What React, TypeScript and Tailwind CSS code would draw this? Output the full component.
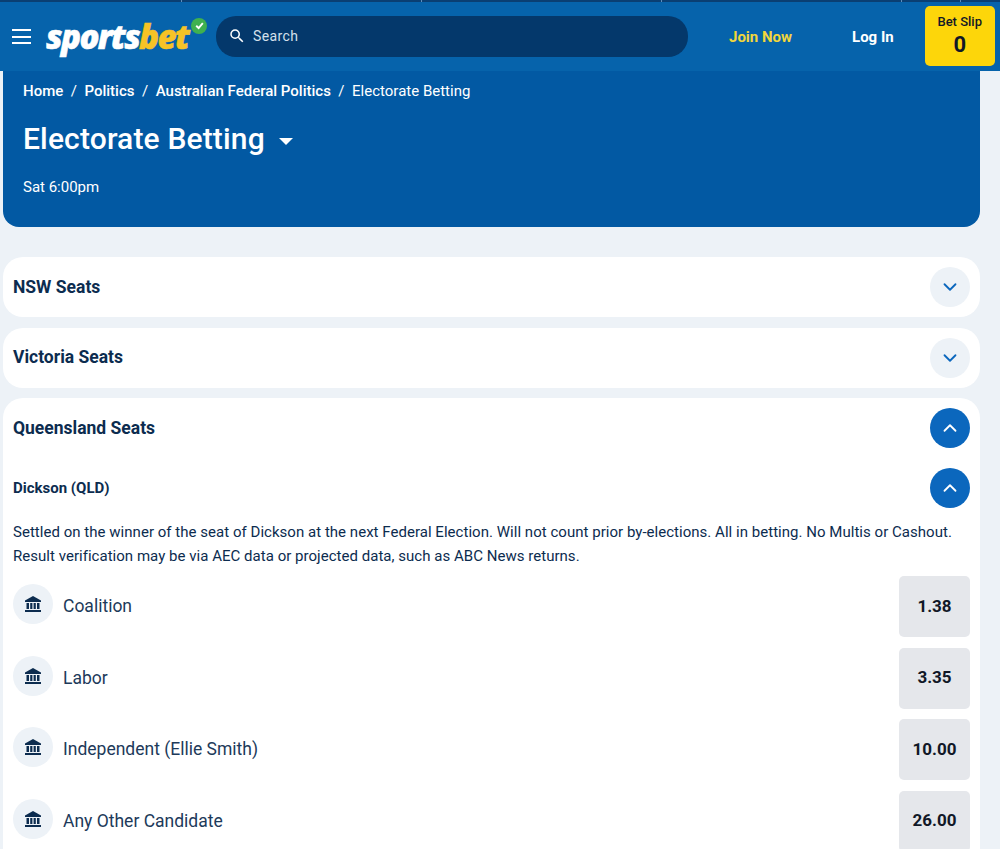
import { ChevronDown, ChevronUp } from 'lucide-react';

const outcomes = [
  { name: 'Coalition', price: '1.38' },
  { name: 'Labor', price: '3.35' },
  { name: 'Independent (Ellie Smith)', price: '10.00' },
  { name: 'Any Other Candidate', price: '26.00' },
];

const Toggle = ({ open }: { open?: boolean }) => (
  <div
    className={`w-10 h-10 rounded-full flex items-center justify-center ${
      open ? 'bg-[#0b67bd] text-white' : 'bg-[#edf2f7] text-[#0b67bd]'
    }`}
  >
    {open ? <ChevronUp size={22} strokeWidth={2} /> : <ChevronDown size={22} strokeWidth={2} />}
  </div>
);

const BankIcon = () => (
  <svg width="20" height="20" viewBox="0 0 20 20" fill="#0c2c4f">
    <path d="M10 2 2 6.5V8h16V6.5z" />
    <rect x="3.5" y="9" width="2.5" height="6" />
    <rect x="7.2" y="9" width="2.2" height="6" />
    <rect x="10.6" y="9" width="2.2" height="6" />
    <rect x="14" y="9" width="2.5" height="6" />
    <rect x="2" y="16" width="16" height="2" />
  </svg>
);

const App = () => {
  return (
    <div className="h-[849px] overflow-hidden bg-[#edf2f7] font-['Roboto',sans-serif] text-[#0c2c4f]">
      {/* Top hairline */}
      <div className="h-[2px] bg-[#0a3f73] flex">
        <div className="ml-[181px] w-px bg-[#5f8fbd]" />
        <div className="ml-[239px] w-px bg-[#5f8fbd]" />
        <div className="ml-[239px] w-px bg-[#5f8fbd]" />
        <div className="ml-[239px] w-px bg-[#5f8fbd]" />
        <div className="ml-[58px] w-px bg-[#5f8fbd]" />
      </div>

      {/* Header */}
      <header className="h-[69px] bg-[#0663ab] flex items-center pl-3">
        <div className="w-[19px] flex flex-col gap-[4.5px]">
          <div className="h-[2px] bg-white" />
          <div className="h-[2px] bg-white" />
          <div className="h-[2px] bg-white" />
        </div>
        <div className="relative ml-[15px] w-[170px] h-10 flex items-center shrink-0">
          <span className="font-['Open_Sans',sans-serif] text-[33px] leading-none font-extrabold italic tracking-[-1.6px] text-white [-webkit-text-stroke:0.5px_currentColor]">
            sports<span className="text-[#f6c326]">bet</span>
          </span>
          <div className="absolute right-[9px] top-[1px] w-[16px] h-[16px] rounded-full bg-[#3fb14f] flex items-center justify-center">
            <svg width="11" height="11" viewBox="0 0 10 10" fill="none">
              <path d="M2 5.2 4.2 7.3 8 2.8" stroke="white" strokeWidth="1.7" />
            </svg>
          </div>
        </div>
        <div className="w-[472px] h-[41px] -mt-px rounded-[20px] bg-[#04386b] flex items-center pl-3 text-[#d5e0ec] shrink-0">
          <svg width="18" height="18" viewBox="0 0 24 24" fill="white">
            <path d="M15.5 14h-.79l-.28-.27A6.47 6.47 0 0 0 16 9.5 6.5 6.5 0 1 0 9.5 16c1.61 0 3.09-.59 4.23-1.57l.27.28v.79l5 4.99L20.49 19l-4.99-5zm-6 0C7.01 14 5 11.99 5 9.5S7.01 5 9.5 5 14 7.01 14 9.5 11.99 14 9.5 14z" />
          </svg>
          <span className="ml-[7px] text-sm tracking-[0.4px]">Search</span>
        </div>
        <span className="ml-[41px] mt-[2px] text-[15px] font-bold text-[#f2d63c] whitespace-nowrap">Join Now</span>
        <span className="ml-[60px] mt-[2px] text-[15px] font-bold text-white whitespace-nowrap">Log In</span>
        <div className="ml-[31px] -mt-[2px] w-[70px] h-[60px] rounded-[5px] bg-[#fdd60a] flex flex-col items-center justify-center text-[#111827] shrink-0">
          <span className="text-[13px] font-medium leading-4 -mt-px">Bet Slip</span>
          <span className="text-[22px] font-bold leading-6 mt-[3px]">0</span>
        </div>
      </header>

      <main className="pl-[3px] pr-5">
        {/* Hero */}
        <section className="h-[156px] bg-[#0259a3] rounded-b-2xl px-5 pt-[11px] text-white">
          <div className="flex items-center gap-[7.5px] text-[15px] leading-[18px]">
            <span className="font-medium">Home</span>
            <span>/</span>
            <span className="font-medium">Politics</span>
            <span>/</span>
            <span className="font-medium">Australian Federal Politics</span>
            <span>/</span>
            <span>Electorate Betting</span>
          </div>
          <div className="mt-[21px] flex items-center gap-[14px]">
            <h1 className="text-[30px] leading-9 font-medium tracking-[0.15px]">Electorate Betting</h1>
            <svg width="14" height="7" viewBox="0 0 14 7" className="mt-1">
              <path d="M0 0h14L7 7z" fill="white" />
            </svg>
          </div>
          <p className="mt-[20px] text-[15px] leading-5">Sat 6:00pm</p>
        </section>

        {/* Seat groups */}
        <section className="mt-[30px] flex flex-col gap-[10.5px]">
          <div className="h-[60px] rounded-[20px] bg-white flex items-center justify-between px-[10px]">
            <h2 className="text-[17.5px] font-bold">NSW Seats</h2>
            <Toggle />
          </div>
          <div className="h-[60px] rounded-[20px] bg-white flex items-center justify-between px-[10px]">
            <h2 className="text-[17.5px] font-bold">Victoria Seats</h2>
            <Toggle />
          </div>
          <div className="rounded-t-[20px] bg-white px-[10px] pt-[10px] pb-10">
            <div className="flex items-center justify-between h-10">
              <h2 className="text-[17.5px] font-bold">Queensland Seats</h2>
              <Toggle open />
            </div>
            <div className="mt-5 flex items-center justify-between h-10">
              <h3 className="text-[15px] font-bold">Dickson (QLD)</h3>
              <Toggle open />
            </div>
            <p className="mt-[12px] text-[15px] leading-6 tracking-[0.03px]">
              Settled on the winner of the seat of Dickson at the next Federal Election. Will not count prior by-elections. All in betting. No Multis or Cashout.
              <br />
              Result verification may be via AEC data or projected data, such as ABC News returns.
            </p>
            <div className="mt-[8px] flex flex-col gap-[10.5px]">
              {outcomes.map((o) => (
                <div key={o.name} className="flex items-center justify-between h-[61px]">
                  <div className="flex items-center">
                    <div className="w-10 h-10 rounded-full bg-[#edf2f7] flex items-center justify-center mb-[5px]">
                      <BankIcon />
                    </div>
                    <span className="ml-[10px] text-[17.5px] text-[#1d3a5a]">{o.name}</span>
                  </div>
                  <div className="w-[71px] h-[61px] rounded-[5px] bg-[#e5e7eb] flex items-center justify-center text-[17px] font-bold text-[#111827]">
                    {o.price}
                  </div>
                </div>
              ))}
            </div>
          </div>
        </section>
      </main>
    </div>
  );
};

export default App;
